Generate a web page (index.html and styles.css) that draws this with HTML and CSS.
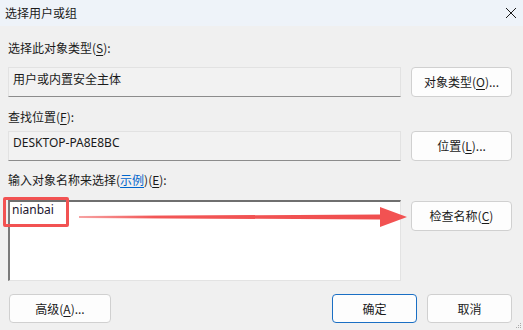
FILE: index.html
```html
<!DOCTYPE html>
<html lang="zh-CN">
<head>
<meta charset="utf-8">
<link rel="stylesheet" href="styles.css">
</head>
<body>
<div class="dialog">
  <div class="titlebar">
    <span class="title">选择用户或组</span>
    <svg class="close" width="12" height="12" viewBox="0 0 12 12"><path d="M1 1L11 11M11 1L1 11" stroke="#1a1a1a" stroke-width="1"/></svg>
  </div>
  <div class="content">
    <div class="label l1">选择此对象类型(<u>S</u>):</div>
    <div class="row r1">
      <div class="field">用户或内置安全主体</div>
      <div class="btn">对象类型(<u>O</u>)...</div>
    </div>
    <div class="label l2">查找位置(<u>F</u>):</div>
    <div class="row r2">
      <div class="field latin">DESKTOP-PA8E8BC</div>
      <div class="btn">位置(<u>L</u>)...</div>
    </div>
    <div class="label l3">输入对象名称来选择(<a class="link">示例</a>)(<u>E</u>):</div>
    <div class="row r3">
      <div class="textarea">nianbai</div>
      <div class="btn">检查名称(<u>C</u>)</div>
    </div>
    <div class="footer">
      <div class="btn wide">高级(<u>A</u>)...</div>
      <div class="actions">
        <div class="btn small primary">确定</div>
        <div class="btn small">取消</div>
      </div>
    </div>
  </div>
  <div class="highlight"></div>
  <svg class="arrow" width="340" height="24" viewBox="0 0 340 24">
    <defs>
      <linearGradient id="g" x1="0" x2="1" y1="0" y2="0">
        <stop offset="0" stop-color="#f7a3a3"/>
        <stop offset="0.25" stop-color="#f25656"/>
        <stop offset="1" stop-color="#f04f4f"/>
      </linearGradient>
    </defs>
    <polygon points="0,11 301,9.5 301,14.5 0,13" fill="url(#g)"/>
    <polygon points="301,2 328,12 301,22" fill="#f25252"/>
  </svg>
  <svg class="grip" width="6" height="6" viewBox="0 0 6 6"><rect x="4" y="0" width="1" height="1" fill="#aaa"/><rect x="2" y="2" width="1" height="1" fill="#aaa"/><rect x="4" y="2" width="1" height="1" fill="#aaa"/><rect x="0" y="4" width="1" height="1" fill="#aaa"/><rect x="2" y="4" width="1" height="1" fill="#aaa"/><rect x="4" y="4" width="1" height="1" fill="#aaa"/></svg>
</div>
</body>
</html>
```
FILE: styles.css
```css
* { box-sizing: border-box; }
html, body { margin: 0; padding: 0; }
body {
  width: 523px;
  height: 330px;
  overflow: hidden;
  background: #f0f0f0;
  font-family: "Noto Sans CJK SC", "Noto Sans", sans-serif;
  font-size: 12px;
  color: #1a1a1a;
}
.dialog { position: relative; width: 523px; height: 330px; }
.titlebar {
  height: 26px;
  background: #eef3f9;
  display: flex;
  align-items: center;
  justify-content: space-between;
  padding: 0 6px 0 5px;
}
.title { font-size: 12px; line-height: 16px; }
.close { display: block; }
.content { padding: 14px 11px 0 8px; }
.label { line-height: 16px; height: 16px; }
.l2 { margin-top: 12px; }
.l3 { margin-top: 11px; }
.label u, .btn u { text-decoration: underline; text-underline-offset: 2px; }
.link { color: #0066cc; text-decoration: underline; text-underline-offset: 2px; }
.row {
  display: grid;
  grid-template-columns: 393px 101px;
  column-gap: 10px;
  align-items: start;
}
.r1 { margin-top: 11px; }
.r2 { margin-top: 6px; }
.r3 { margin-top: 12px; }
.field {
  height: 30px;
  background: #f2f2f2;
  border: 1px solid #e2e2e2;
  border-bottom: 1px solid #8c8c8c;
  padding: 3px 4px 0 4px;
  line-height: 16px;
}
.field.latin { font-family: "Noto Sans", sans-serif; }
.btn {
  height: 30px;
  background: #fdfdfd;
  border: 1px solid #d0d0d0;
  border-radius: 4px;
  display: flex;
  align-items: center;
  justify-content: center;
  line-height: 16px;
}
.textarea {
  height: 81px;
  background: #ffffff;
  border-top: 2px solid #6f6f6f;
  border-left: 2px solid #7a7a7a;
  border-right: 1px solid #e3e3e3;
  border-bottom: 1px solid #e3e3e3;
  padding: 0 2px;
  line-height: 16px;
  font-family: "Noto Sans", sans-serif;
  font-size: 12px;
  color: #1d1630;
}
.r3 .btn { margin-top: 1px; }
.footer {
  margin-top: 13px;
  display: flex;
  justify-content: space-between;
  align-items: center;
  padding-left: 1px;
}
.actions { display: flex; gap: 10px; }
.btn.wide { width: 102px; height: 29px; }
.btn.small { width: 85px; height: 29px; }
.btn.primary { border-color: #1a6fc4; }
.highlight {
  position: absolute;
  left: 3px;
  top: 197px;
  width: 66px;
  height: 30px;
  border: 3px solid #f25252;
  border-radius: 2px;
}
.arrow { position: absolute; left: 79px; top: 205px; }
.grip { position: absolute; right: 1px; bottom: 1px; }
```
